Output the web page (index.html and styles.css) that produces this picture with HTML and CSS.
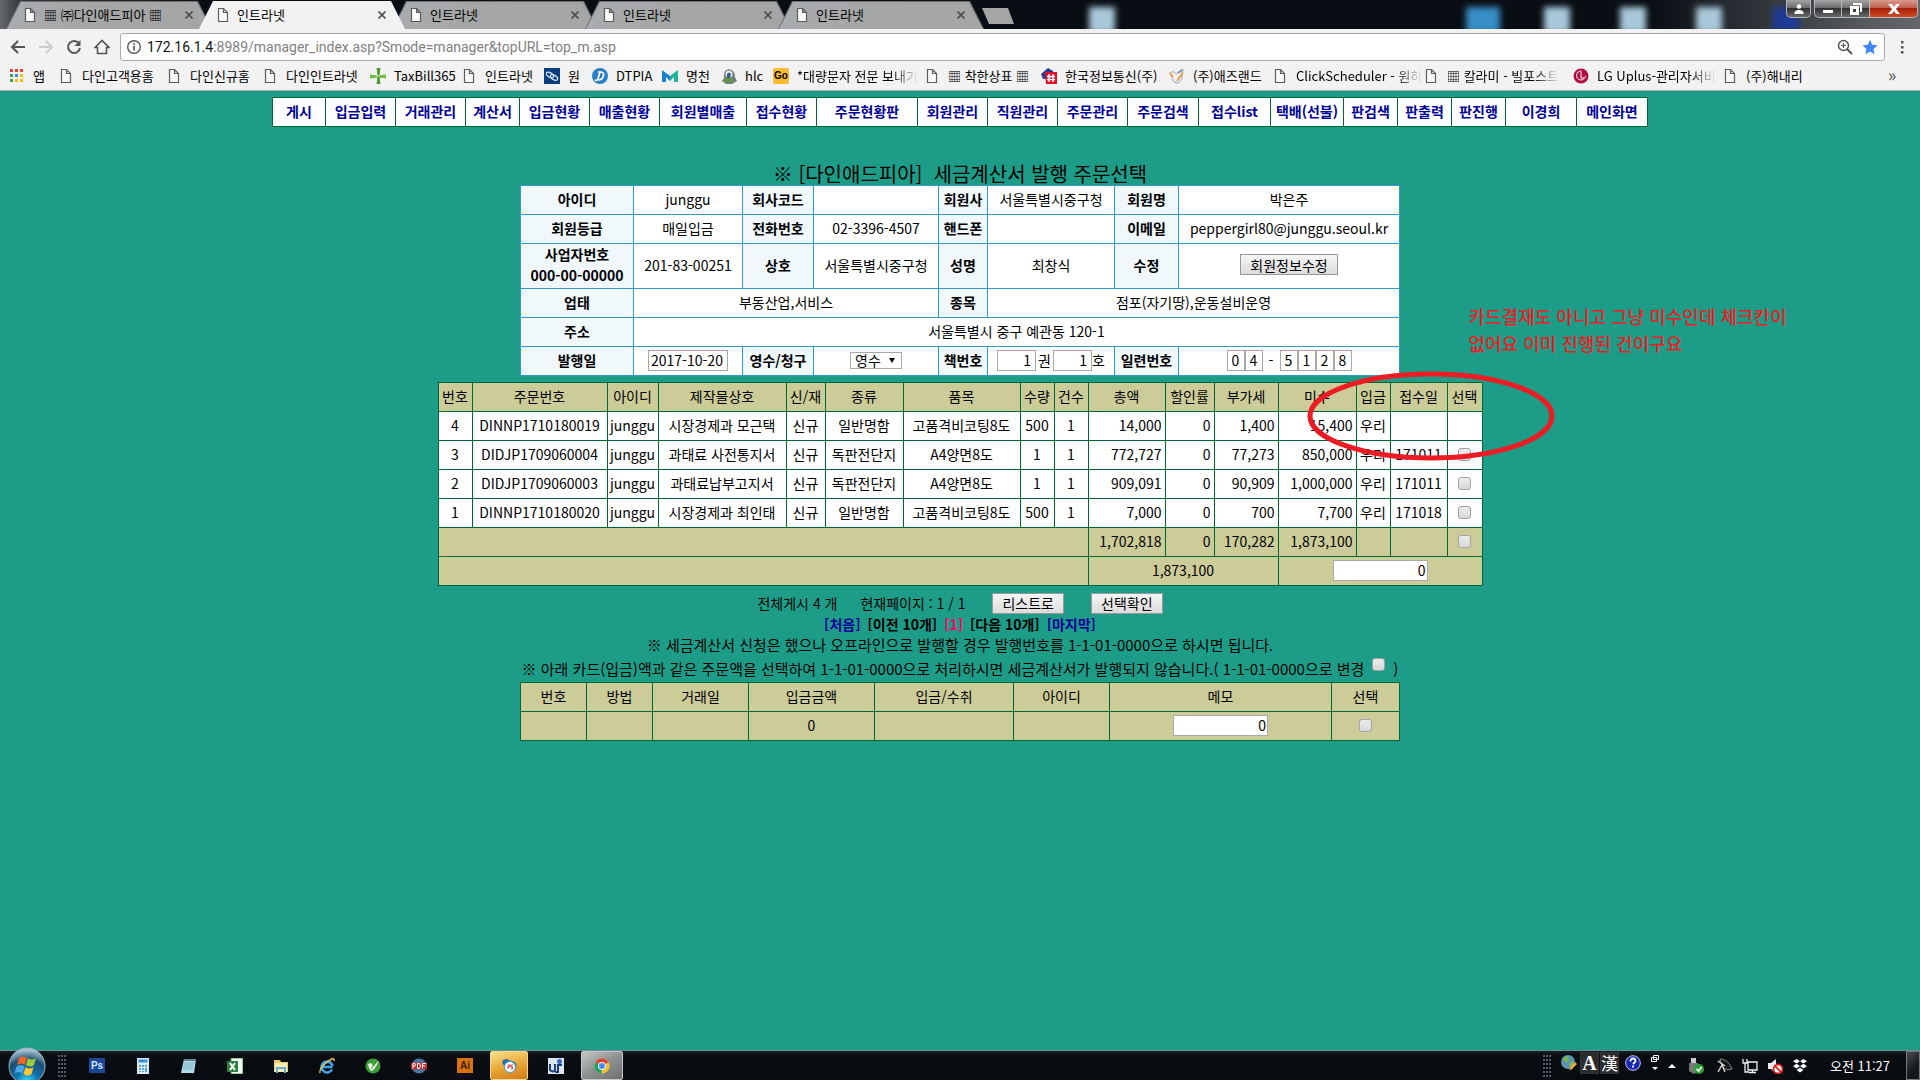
FILE: index.html
```html
<!DOCTYPE html>
<html lang="ko">
<head>
<meta charset="utf-8">
<title>인트라넷</title>
<link rel="stylesheet" href="styles.css">
</head>
<body>
<svg class="defs" aria-hidden="true">
  <symbol id="page" viewBox="0 0 16 16"><path d="M3.5 1.5h5l4 4v9h-9z M8.5 1.5v4h4" fill="#fafafa" stroke="#5c5c5c" stroke-width="1.2"/></symbol>
  <symbol id="close" viewBox="0 0 10 10"><path d="M1.5 1.5l7 7M8.500 1.500l-7 7" stroke="#4a4a4a" stroke-width="1.7" fill="none"/></symbol>
</svg>

<header class="browser">
  <div class="tabstrip">
    <div class="desk-blur b1"></div><div class="desk-blur b2"></div><div class="desk-blur b3"></div><div class="desk-blur b4"></div><div class="desk-blur b5"></div><div class="desk-blur b6"></div>
    <div class="tab"><svg class="ico"><use href="#page"/></svg><span class="tab-name">▦ ㈜다인애드피아 ▦</span><button class="tab-x" aria-label="닫기"><svg><use href="#close"/></svg></button></div>
    <div class="tab active"><svg class="ico"><use href="#page"/></svg><span class="tab-name">인트라넷</span><button class="tab-x" aria-label="닫기"><svg><use href="#close"/></svg></button></div>
    <div class="tab"><svg class="ico"><use href="#page"/></svg><span class="tab-name">인트라넷</span><button class="tab-x" aria-label="닫기"><svg><use href="#close"/></svg></button></div>
    <div class="tab"><svg class="ico"><use href="#page"/></svg><span class="tab-name">인트라넷</span><button class="tab-x" aria-label="닫기"><svg><use href="#close"/></svg></button></div>
    <div class="tab"><svg class="ico"><use href="#page"/></svg><span class="tab-name">인트라넷</span><button class="tab-x" aria-label="닫기"><svg><use href="#close"/></svg></button></div>
    <button class="newtab" aria-label="새 탭"></button>
    <div class="winbtns">
      <button class="wb user" aria-label="사용자"><svg viewBox="0 0 12 12"><circle cx="6" cy="3.500" r="2.300"/><path d="M1.500 11V9.500Q2 7 6 7t4.500 2.500V11z"/></svg></button>
      <button class="wb min" aria-label="최소화"><svg viewBox="0 0 12 12"><path d="M1 7h10v3H1z"/></svg></button>
      <button class="wb max" aria-label="복원"><svg viewBox="0 0 12 12"><path d="M3 0h9v9h-2V2H3z"/><path fill-rule="evenodd" d="M0 3h9v9H0zM3 6v3h3V6z"/></svg></button>
      <button class="wb quit" aria-label="닫기"><svg viewBox="0 0 12 12"><path d="M0 1h4l2 3 2-3h4L8 6l4 5H8L6 8l-2 3H0l4-5z"/></svg></button>
    </div>
  </div>

  <div class="toolbar">
    <button class="tool" aria-label="뒤로"><svg viewBox="0 0 16 16"><path d="M15 8H2M8 2L2 8l6 6" fill="none" stroke="#555" stroke-width="2"/></svg></button>
    <button class="tool" aria-label="앞으로"><svg viewBox="0 0 16 16"><path d="M1 8h13M8 2l6 6-6 6" fill="none" stroke="#ccc" stroke-width="2"/></svg></button>
    <button class="tool" aria-label="새로고침"><svg viewBox="0 0 16 16"><path d="M13 4.500A6 6 0 1 0 14 9" fill="none" stroke="#555" stroke-width="2"/><path d="M14.500 1v6h-6z" fill="#555"/></svg></button>
    <button class="tool" aria-label="홈"><svg viewBox="0 0 16 16"><path d="M1 8.500L8 1.500l7 7h-2.500v6h-9v-6z" fill="none" stroke="#555" stroke-width="1.600"/></svg></button>
    <div class="omnibox">
      <svg class="ico" viewBox="0 0 16 16"><circle cx="8" cy="8" r="6.300" fill="none" stroke="#555" stroke-width="1.400"/><path d="M7.200 7h1.700v4.500H7.200zM7.200 4.200h1.700v1.700H7.200z" fill="#555"/></svg>
      <span class="url"><b>172.16.1.4</b>:8989/manager_index.asp?Smode=manager&amp;topURL=top_m.asp</span>
      <svg class="ico" viewBox="0 0 16 16"><circle cx="6.500" cy="6.500" r="5" fill="none" stroke="#555" stroke-width="1.500"/><path d="M10 10l5 5" stroke="#555" stroke-width="2"/><path d="M4 6.500h5M6.500 4v5" stroke="#555" stroke-width="1.200"/></svg>
      <svg class="ico" viewBox="0 0 16 16"><path d="M8 .8l2.200 4.900 5.300.6-3.900 3.600 1 5.300L8 12.600l-4.600 2.600 1-5.300L.5 6.300l5.300-.6z" fill="#4285f4"/></svg>
    </div>
    <button class="tool menu" aria-label="메뉴"><svg viewBox="0 0 16 16"><path d="M7 2h2.500v2.500H7zM7 7h2.500v2.500H7zM7 12h2.500v2.500H7z" fill="#555"/></svg></button>
  </div>

  <nav class="bookmarks">
    <a href="#"><svg class="ico" viewBox="0 0 16 16"><path d="M1 1h3v3H1zM6 1h3v3H6zM11 1h3v3h-3z" fill="#ea4335"/><path d="M1 6h3v3H1z" fill="#34a853"/><path d="M6 6h3v3H6z" fill="#4285f4"/><path d="M11 6h3v3h-3zM6 11h3v3H6zM11 11h3v3h-3z" fill="#fbbc05"/><path d="M1 11h3v3H1z" fill="#34a853"/></svg><span>앱</span></a>
    <a href="#"><svg class="ico"><use href="#page"/></svg><span>다인고객용홈</span></a>
    <a href="#"><svg class="ico"><use href="#page"/></svg><span>다인신규홈</span></a>
    <a href="#"><svg class="ico"><use href="#page"/></svg><span>다인인트라넷</span></a>
    <a href="#"><svg class="ico" viewBox="0 0 16 16"><path d="M7 0h3l-1 7H8zM7 16h3L9 9H8z" fill="#4a9b2f" stroke="#4a9b2f"/><path d="M0 7l7 1v1l-7 1zM16 7L9 8v1l7 1z" fill="#6cba3f" stroke="#6cba3f"/></svg><span>TaxBill365</span></a>
    <a href="#"><svg class="ico"><use href="#page"/></svg><span>인트라넷</span></a>
    <a href="#"><svg class="ico" viewBox="0 0 16 16"><path d="M0 0h16v16H0z" fill="#0b3f80"/><ellipse cx="6" cy="7" rx="4" ry="2.200" transform="rotate(30 6 7)" fill="none" stroke="#cfe4f8" stroke-width="1.300"/><ellipse cx="10" cy="9.500" rx="4" ry="2.200" transform="rotate(30 10 9.500)" fill="none" stroke="#cfe4f8" stroke-width="1.300"/></svg><span>원</span></a>
    <a href="#"><svg class="ico" viewBox="0 0 16 16"><circle cx="8" cy="8" r="8" fill="#2b7fc4"/><path d="M6 4h3q4 1 2 5-1 3-5 3M8 4L6 11q-1 2-3 1" fill="none" stroke="#fff" stroke-width="1.700"/></svg><span>DTPIA</span></a>
    <a href="#"><svg class="ico" viewBox="0 0 16 16"><path d="M0 14V2l8 6v5L4 9v5z" fill="#1583cf"/><path d="M16 14V2L8 8v5l4-4v5z" fill="#24b39b"/></svg><span>명천</span></a>
    <a href="#"><svg class="ico" viewBox="0 0 16 16"><path d="M3 10Q2 2 8 1q6 1 6 8l2 4-5 3H5l-4-3z" fill="#6c8578"/><circle cx="8" cy="6" r="3.500" fill="#e9eef0"/><path d="M6 6q2-3 4 0l-1 4H6z" fill="#395a9b"/><path d="M3 13l5-2 4 3" stroke="#5d9e2c" stroke-width="2" fill="none"/></svg><span>hlc</span></a>
    <a href="#"><i class="go">Go</i><span>*대량문자 전문 보내기</span></a>
    <a href="#"><svg class="ico"><use href="#page"/></svg><span>▦ 착한상표 ▦</span></a>
    <a href="#"><svg class="ico" viewBox="0 0 16 16"><path d="M0 6l7-6 5 3v8H2z" fill="#2a3b90"/><path d="M4 4h12v12H5z" fill="#e3122b"/><path d="M8 6v8M12 6v8M6 8.500h8M6 11.500h8" stroke="#fff" stroke-width="1.400"/></svg><span>한국정보통신(주)</span></a>
    <a href="#"><svg class="ico" viewBox="0 0 16 16"><path d="M1 5q4-3 6 1l7-5-1 7q0 6-5 7-5-1-5-6z" fill="#f4efe8" stroke="#9aa6b4"/><path d="M1 5l3 4M8 13l6-9" stroke="#e89a3c" stroke-width="1.600"/><path d="M9 5l4-3" stroke="#4f8dc8" stroke-width="1.500"/></svg><span>(주)애즈랜드</span></a>
    <a href="#"><svg class="ico"><use href="#page"/></svg><span>ClickScheduler - 원하</span></a>
    <a href="#"><svg class="ico"><use href="#page"/></svg><span>▦ 칼라미 - 빌포스트</span></a>
    <a href="#"><svg class="ico" viewBox="0 0 16 16"><circle cx="8" cy="8" r="7.500" fill="#b00b45"/><path d="M8 4v6h3M12.500 8a4.500 4.500 0 1 1-4-5" fill="none" stroke="#fff" stroke-width="1"/></svg><span>LG Uplus-관리자서비</span></a>
    <a href="#"><svg class="ico"><use href="#page"/></svg><span>(주)해내리</span></a>
    <button class="more" aria-label="더보기">»</button>
  </nav>
</header>

<main>
  <nav class="menu-bar">
    <a class="w52" href="#">게시</a><a class="w70" href="#">입금입력</a><a class="w70" href="#">거래관리</a><a class="w54" href="#">계산서</a><a class="w70" href="#">입금현황</a><a class="w70" href="#">매출현황</a><a class="w87" href="#">회원별매출</a><a class="w70" href="#">접수현황</a><a class="w101" href="#">주문현황판</a><a class="w70" href="#">회원관리</a><a class="w70" href="#">직원관리</a><a class="w70" href="#">주문관리</a><a class="w71" href="#">주문검색</a><a class="w72" href="#">접수list</a><a class="w73" href="#">택배(선불)</a><a class="w54" href="#">판검색</a><a class="w54" href="#">판출력</a><a class="w54" href="#">판진행</a><a class="w71" href="#">이경희</a><a class="w71" href="#">메인화면</a>
  </nav>

  <h1>※ [다인애드피아]&nbsp; 세금계산서 발행 주문선택</h1>

  <table class="info">
    <colgroup><col class="w113"><col class="w109"><col class="w71"><col class="w125"><col class="w49"><col class="w127"><col class="w64"><col></colgroup>
    <tr><th>아이디</th><td>junggu</td><th>회사코드</th><td></td><th>회원사</th><td>서울특별시중구청</td><th>회원명</th><td>박은주</td></tr>
    <tr><th>회원등급</th><td>매일입금</td><th>전화번호</th><td>02-3396-4507</td><th>핸드폰</th><td></td><th>이메일</th><td>peppergirl80@junggu.seoul.kr</td></tr>
    <tr class="tall"><th>사업자번호<br>000-00-00000</th><td>201-83-00251</td><th>상호</th><td>서울특별시중구청</td><th>성명</th><td>최창식</td><th>수정</th><td><button class="btn">회원정보수정</button></td></tr>
    <tr><th>업태</th><td colspan="3">부동산업,서비스</td><th>종목</th><td colspan="3">점포(자기땅),운동설비운영</td></tr>
    <tr><th>주소</th><td colspan="7">서울특별시 중구 예관동 120-1</td></tr>
    <tr>
      <th><label for="date">발행일</label></th><td><input id="date" class="field date" value="2017-10-20"></td>
      <th><label for="kind">영수/청구</label></th><td><div class="pick"><select id="kind"><option>영수</option><option>청구</option></select></div></td>
      <th><label for="book">책번호</label></th><td><div class="inline books"><input id="book" class="field num" value="1"><span>권</span><input class="field num" value="1" aria-label="호"><span>호</span></div></td>
      <th><label for="serial">일련번호</label></th><td><div class="inline"><input id="serial" class="field digit" value="0"><input class="field digit" value="4" aria-label="일련번호 2"><span class="dash">-</span><input class="field digit" value="5" aria-label="일련번호 3"><input class="field digit" value="1" aria-label="일련번호 4"><input class="field digit" value="2" aria-label="일련번호 5"><input class="field digit" value="8" aria-label="일련번호 6"></div></td>
    </tr>
  </table>

  <section class="orders-wrap">
    <table class="list orders">
      <colgroup><col class="w34"><col class="w135"><col class="w51"><col class="w128"><col class="w39"><col class="w78"><col class="w117"><col class="w34"><col class="w34"><col class="w77"><col class="w49"><col class="w64"><col class="w78"><col class="w34"><col class="w57"><col></colgroup>
      <thead><tr><th>번호</th><th>주문번호</th><th>아이디</th><th>제작물상호</th><th>신/재</th><th>종류</th><th>품목</th><th>수량</th><th>건수</th><th>총액</th><th>할인률</th><th>부가세</th><th>미수</th><th>입금</th><th>접수일</th><th>선택</th></tr></thead>
      <tbody>
      <tr><td>4</td><td>DINNP1710180019</td><td>junggu</td><td>시장경제과 모근택</td><td>신규</td><td>일반명함</td><td>고품격비코팅8도</td><td>500</td><td>1</td><td class="r">14,000</td><td class="r">0</td><td class="r">1,400</td><td class="r">15,400</td><td>우리</td><td></td><td></td></tr>
      <tr><td>3</td><td>DIDJP1709060004</td><td>junggu</td><td>과태료 사전통지서</td><td>신규</td><td>독판전단지</td><td>A4양면8도</td><td>1</td><td>1</td><td class="r">772,727</td><td class="r">0</td><td class="r">77,273</td><td class="r">850,000</td><td>우리</td><td>171011</td><td><input type="checkbox" aria-label="3번 선택"></td></tr>
      <tr><td>2</td><td>DIDJP1709060003</td><td>junggu</td><td>과태료납부고지서</td><td>신규</td><td>독판전단지</td><td>A4양면8도</td><td>1</td><td>1</td><td class="r">909,091</td><td class="r">0</td><td class="r">90,909</td><td class="r">1,000,000</td><td>우리</td><td>171011</td><td><input type="checkbox" aria-label="2번 선택"></td></tr>
      <tr><td>1</td><td>DINNP1710180020</td><td>junggu</td><td>시장경제과 최인태</td><td>신규</td><td>일반명함</td><td>고품격비코팅8도</td><td>500</td><td>1</td><td class="r">7,000</td><td class="r">0</td><td class="r">700</td><td class="r">7,700</td><td>우리</td><td>171018</td><td><input type="checkbox" aria-label="1번 선택"></td></tr>
      </tbody>
      <tfoot>
      <tr><td colspan="9"></td><td class="r">1,702,818</td><td class="r">0</td><td class="r">170,282</td><td class="r">1,873,100</td><td></td><td></td><td><input type="checkbox" aria-label="전체 선택"></td></tr>
      <tr><td colspan="9"></td><td colspan="3">1,873,100</td><td colspan="4"><input class="field sum" value="0" aria-label="선택 합계"></td></tr>
      </tfoot>
    </table>
    <svg class="mark" viewBox="0 0 248 90" aria-hidden="true"><ellipse cx="124" cy="45" rx="121" ry="42" fill="none" stroke="#ed1c24" stroke-width="5"/></svg>
    <p class="memo">카드결재도 아니고 그냥 미수인데 체크칸이<br>없어요 이미 진행된 건이구요</p>
  </section>

  <div class="status"><span>전체게시 4 개</span><span>현재페이지 : 1 / 1</span><button class="btn">리스트로</button><button class="btn">선택확인</button></div>
  <div class="pager"><a href="#">[처음]</a><span>[이전 10개]</span><span class="now">[1]</span><span>[다음 10개]</span><a href="#">[마지막]</a></div>
  <p class="note">※ 세금계산서 신청은 했으나 오프라인으로 발행할 경우 발행번호를 1-1-01-0000으로 하시면 됩니다.</p>
  <p class="note last"><label for="chg">※ 아래 카드(입금)액과 같은 주문액을 선택하여 1-1-01-0000으로 처리하시면 세금계산서가 발행되지 않습니다.( 1-1-01-0000으로 변경</label><input id="chg" type="checkbox"><span>)</span></p>

  <table class="list pays">
    <colgroup><col class="w66"><col class="w66"><col class="w96"><col class="w126"><col class="w139"><col class="w96"><col class="w222"><col></colgroup>
    <thead><tr><th>번호</th><th>방법</th><th>거래일</th><th>입금금액</th><th>입금/수취</th><th>아이디</th><th>메모</th><th>선택</th></tr></thead>
    <tfoot><tr><td></td><td></td><td></td><td>0</td><td></td><td></td><td><input class="field sum" value="0" aria-label="메모"></td><td><input type="checkbox" aria-label="선택"></td></tr></tfoot>
  </table>
</main>

<footer class="taskbar">
  <button class="orb" aria-label="시작"><svg viewBox="0 0 38 38"><defs><radialGradient id="og" cx=".5" cy=".95" r=".9"><stop offset="0" stop-color="#35e0ff"/><stop offset=".35" stop-color="#1173ae"/><stop offset=".7" stop-color="#1b4d72"/><stop offset="1" stop-color="#a9c3d2"/></radialGradient></defs><circle cx="19" cy="19" r="18" fill="url(#og)" stroke="#9ab3c0"/><path d="M11 11q4-3 8 0l-2 7q-4-3-8 0z" fill="#f0652a"/><path d="M20 11q4 3 8 0l-2 7q-4 3-8 0z" fill="#9ccc3c"/><path d="M8.500 19.500q4-3 8 0l-2 7q-4-3-8 0z" fill="#4aa9e8"/><path d="M17.500 20q4 3 8 0l-2 7q-4 3-8 0z" fill="#fdc52f"/></svg></button>
  <i class="grip"></i>
  <div class="apps">
    <button aria-label="Photoshop"><i class="sq ps">Ps</i></button>
    <button aria-label="계산기"><svg viewBox="0 0 16 16"><path d="M2 0h12v16H2z" fill="#d9ecfa"/><path d="M3.500 1.500h9v3h-9z" fill="#3c8fd0"/><path d="M4 7h2v2H4zM7 7h2v2H7zM10 7h2v2h-2zM4 10h2v2H4zM7 10h2v2H7zM10 10h2v4h-2zM4 13h2v1H4zM7 13h2v1H7z" fill="#5a9dd0"/></svg></button>
    <button aria-label="메모장"><svg viewBox="0 0 16 16"><path d="M3 1h12l-2 14H0z" fill="#b4dce9"/><path d="M3 1h12v2H3z" fill="#6c7f88"/><path d="M3 5h10M3 7h10M2 9h10M2 11h10" stroke="#6fa9bf" stroke-width=".8"/></svg></button>
    <button aria-label="Excel"><svg viewBox="0 0 16 16"><path d="M4 0h12v16H4z" fill="#f1f8ef" stroke="#4d9b4d"/><path d="M0 3h11v11H0z" fill="#2d8040"/><path d="M3 5l5 7M8 5l-5 7" stroke="#fff" stroke-width="2"/></svg></button>
    <button aria-label="탐색기"><svg viewBox="0 0 16 16"><path d="M1 2h6l1 2h7v10H1z" fill="#e9c96a"/><path d="M2 5h12v9H2z" fill="#fbeeb2"/><path d="M4 15v-5h8v5" fill="none" stroke="#66aee0" stroke-width="2"/></svg></button>
    <button aria-label="Internet Explorer"><svg viewBox="0 0 16 16"><path d="M13.500 9H4.500a4.500 4.500 0 0 1 9-1M13 11.500a5.500 5.500 0 1 1 .5-3.500" fill="none" stroke="#3ea4ec" stroke-width="2.600"/><path d="M1 15Q0 10 8 4t7-1" fill="none" stroke="#f4c542" stroke-width="1.400"/></svg></button>
    <button aria-label="CorelDRAW"><svg viewBox="0 0 16 16"><circle cx="8" cy="8" r="7.500" fill="#3aa03c"/><path d="M3 6q1 6 4 7l3-3 4-7-6 5-2-3z" fill="#f5f8e7"/><path d="M6 11l5-6" stroke="#3aa03c"/></svg></button>
    <button aria-label="PDF"><svg viewBox="0 0 16 16"><circle cx="8" cy="8" r="7.500" fill="#4675a6"/><path d="M0 4.500h16v7H0z" fill="#c42d2d"/><path d="M2 10.500v-5h2q1 1.300 0 2.500H2M6.500 5.500h2q2 2.500 0 5h-2zM11.500 10.500v-5H15M12 8h2" fill="none" stroke="#fff" stroke-width="1"/></svg></button>
    <button aria-label="Illustrator"><i class="sq ai">Ai</i></button>
    <button class="hot" aria-label="메신저"><svg viewBox="0 0 16 16"><path d="M1 4q2-5 7-2l6 2q3 4 0 8-5 5-9 0z" fill="#286fa5"/><circle cx="9" cy="9" r="5.500" fill="#fff" stroke="#3ba5d4"/><path d="M7 11V7h2v2H7M12 7h-2v2h1.500v2H10" fill="none" stroke="#d43b3b"/></svg></button>
    <button aria-label="UI"><svg viewBox="0 0 16 16"><path d="M0 0h16v16H0z" fill="#dbe6f4"/><path d="M2 6v6q3 3 5 0V6M7 14h3V7h4" fill="none" stroke="#1e3c78" stroke-width="2"/><circle cx="11.500" cy="3.500" r="2.500" fill="#3a67c0"/></svg></button>
    <button class="on" aria-label="Chrome"><svg viewBox="0 0 16 16"><circle cx="8" cy="8" r="7.500" fill="#f3c62c"/><path d="M8 8L1.500 4.200A7.500 7.500 0 0 1 14.500 4.300z" fill="#dc4437"/><path d="M8 8L1.500 4.200A7.500 7.500 0 0 0 7.500 15.500z" fill="#1ea362"/><circle cx="8" cy="8" r="3.600" fill="#4a8af4" stroke="#fff"/></svg></button>
  </div>
  <div class="tray">
    <i class="grip"></i>
    <svg class="ico up" viewBox="0 0 16 16"><circle cx="7" cy="7" r="7" fill="#5d93b5"/><path d="M2 3q3-3 5-1l1 4-4 1zM8 9l4-3 1 4-4 3z" fill="#7fb84a"/><path d="M8 14l6-7 2 2-6 6z" fill="#f0a94c"/></svg>
    <button class="ime">A</button><button class="ime han">漢</button>
    <svg class="ico up help" viewBox="0 0 16 16"><circle cx="8" cy="8" r="7.300" fill="#1726b3" stroke="#c8ccec"/><path d="M5.500 6.500q0-3 2.500-3t2.500 2.500Q10.500 7 8 9M8 10.500v2" fill="none" stroke="#fff" stroke-width="1.800"/></svg>
    <svg class="ico mini" viewBox="0 0 10 20"><path d="M3.500 2.500h5v4h-5zM1.500 4.500h5v4h-5z" fill="#101418" stroke="#fff"/><path d="M2 14h6l-3 3z" fill="#fff"/></svg>
    <svg class="ico arrow" viewBox="0 0 10 10"><path d="M1 7h8L5 3z" fill="#fff"/></svg>
    <svg class="ico" viewBox="0 0 16 16"><path d="M3 0h5v5H3z" fill="#ccc"/><path d="M1 5h9v9l-4 2-5-3z" fill="#777"/><circle cx="11" cy="11" r="5" fill="#2fa236"/><path d="M8.500 11l2 2 3-4" stroke="#fff" stroke-width="1.500" fill="none"/></svg>
    <svg class="ico sat" viewBox="0 0 16 16"><path d="M3 1q8 0 12 10-6 2-9-2T3 1z" fill="#171717" stroke="#888"/><path d="M1 14l4-7 3 7M1 3l7 5" stroke="#ddd" stroke-width="1.300" fill="none"/></svg>
    <svg class="ico" viewBox="0 0 16 16"><path d="M6 4h9v8H6zM7 14.500h7M10.500 12v3M1 1v4h4V1M3 5v9h4" fill="none" stroke="#f2f2f2" stroke-width="1.300"/></svg>
    <svg class="ico" viewBox="0 0 16 16"><path d="M1 5h3l5-4v14l-5-4H1z" fill="#eee"/><circle cx="11" cy="11" r="4.500" fill="#fff" stroke="#dd2222" stroke-width="1.800"/><path d="M8 8l6 6" stroke="#dd2222" stroke-width="1.800"/></svg>
    <svg class="ico" viewBox="0 0 16 16"><path d="M4.500 1L8 3.300 4.500 5.600 1 3.300zM11.500 1L15 3.300l-3.500 2.300L8 3.300zM4.500 5.800L8 8.100l-3.500 2.300L1 8.100zM11.500 5.800L15 8.100l-3.500 2.300L8 8.100zM8 9.800l3.500 2.300L8 14.400l-3.500-2.300z" fill="#fff"/></svg>
    <time>오전 11:27</time>
    <button class="showdesk" aria-label="바탕 화면 보기"></button>
  </div>
</footer>
</body>
</html>
```
FILE: styles.css
```css
* { box-sizing: border-box; }

body {
  margin: 0;
  min-height: 100vh;
  display: flex;
  flex-direction: column;
  background: #1d9d88;
  color: #000;
  font: 14px/22px "Noto Sans CJK KR", sans-serif;
}

button, input, select { font: inherit; color: inherit; margin: 0; }
button { padding: 0; border: 0; background: none; }
a { color: inherit; text-decoration: none; }
.defs { position: absolute; width: 0; height: 0; }
.ico { width: 16px; height: 16px; flex: none; }

/* ---------- browser frame ---------- */
.browser { background: #f2f2f2; border-bottom: 1px solid #b0b0b0; font-size: 13px; }

.tabstrip {
  position: relative;
  display: flex;
  height: 29px;
  padding: 1px 0 0 6px;
  overflow: hidden;
  background: linear-gradient(90deg, #65686b 0, #34383c 20px, #090e15 210px, #090e15 86%, #55595c 97%, #63666a 100%);
}
.tab {
  position: relative;
  display: flex;
  align-items: center;
  width: 206px;
  flex: none;
  margin-right: -13px;
  padding: 0 18px 0 16px;
  isolation: isolate;
}
.tab::before, .tab::after {
  content: "";
  position: absolute;
  inset: 0;
  z-index: -1;
  background: #6d6f70;
  clip-path: polygon(0 100%, 14px 0, calc(100% - 14px) 0, 100% 100%);
}
.tab::after { inset: 1px 1px 0; background: linear-gradient(90deg, #a9acb0, #a5a6a6 40%, #a5a5a5); }
.tab:first-child::after { background: #adb0b5; }
.tab.active { z-index: 2; }
.tab.active::before, .tab.active::after { background: #f2f2f2; }
.tab-name { flex: 1; margin-left: 6px; white-space: nowrap; }
.tab-x, .tab-x svg { width: 10px; height: 10px; display: block; }
.newtab { width: 32px; height: 16px; margin: 7px 0 0 11px; background: #a5a5a5; clip-path: polygon(0 0, 26px 0, 100% 100%, 7px 100%); }

.desk-blur { position: absolute; top: 7px; width: 26px; height: 26px; filter: blur(3px); background: #a9c9da; }
.b1 { left: 1089px; }
.b2 { left: 1466px; width: 34px; background: #388fc8; }
.b3 { left: 1544px; }
.b4 { left: 1620px; }
.b5 { left: 1696px; }
.b6 { left: 1773px; background: #1d3a94; }

.winbtns { position: relative; display: flex; height: 18px; margin: -1px 2px 0 auto; }
.wb {
  width: 28px;
  border: 1px solid #b5b7b9;
  border-top: 0;
  background: linear-gradient(#a2a4a6, #6a6c6e 45%, #303234 50%, #66686a);
  display: grid;
  place-items: center;
}
.wb svg { width: 12px; height: 12px; fill: #fff; }
.user { width: 25px; margin-right: 3px; border-radius: 0 0 5px 5px; }
.min { border-radius: 0 0 0 5px; }
.max, .quit { border-left: 0; }
.quit { width: 48px; border-radius: 0 0 5px 0; background: linear-gradient(#d99a8d, #c0604e 45%, #a82008 50%, #cf4a25); }

.toolbar { display: flex; align-items: center; height: 33px; padding: 2px 4px 0 4px; }
.tool { width: 28px; height: 28px; display: grid; place-items: center; }
.tool svg { width: 16px; height: 16px; }
.menu { margin-left: 3px; }
.omnibox {
  flex: 1;
  display: flex;
  align-items: center;
  gap: 9px;
  height: 28px;
  margin-left: 4px;
  padding: 0 6px 0 5px;
  border: 1px solid #aaa;
  border-radius: 3px;
  background: #fff;
}
.url { flex: 1; margin-left: -4px; font-family: Roboto, sans-serif; font-size: 14px; color: #808080; }
.url b { color: #111; font-weight: 400; }

.bookmarks {
  display: grid;
  grid-template-columns: 49px 108px 96px 108px 91px 83px 48px 70px 59px 52px 151px 117px 128px 103px 151px 150px 149px 1fr 40px;
  align-items: center;
  height: 28px;
  padding: 0 8px 0 9px;
}
.bookmarks a { display: flex; align-items: center; gap: 8px; white-space: nowrap; }
.bookmarks a:nth-child(11) span, .bookmarks a:nth-child(15) span, .bookmarks a:nth-child(16) span, .bookmarks a:nth-child(17) span {
  -webkit-mask-image: linear-gradient(90deg, #000 calc(100% - 26px), transparent);
  mask-image: linear-gradient(90deg, #000 calc(100% - 26px), transparent);
}
.go { width: 16px; height: 16px; flex: none; border-radius: 2px; background: #fbb934; font: 900 10px/16px "Liberation Sans", sans-serif; text-align: center; }
.more { font-size: 18px; line-height: 18px; padding-bottom: 4px; color: #555; }

/* ---------- page ---------- */
main { flex: 1; display: flex; flex-direction: column; align-items: center; padding-top: 6px; }

.menu-bar { display: flex; border: 1px solid #006633; background: #fff; }
.menu-bar a { flex: none; height: 28px; line-height: 26px; text-align: center; color: #000099; font-weight: 700; white-space: nowrap; }
.menu-bar a + a { border-left: 1px solid #006633; }

.w34 { width: 34px; } .w39 { width: 39px; } .w49 { width: 49px; } .w51 { width: 51px; }
.w52 { width: 52px; } .w54 { width: 54px; } .w57 { width: 57px; } .w64 { width: 64px; }
.w66 { width: 66px; } .w70 { width: 70px; } .w71 { width: 71px; } .w72 { width: 72px; }
.w73 { width: 73px; } .w77 { width: 77px; } .w78 { width: 78px; } .w87 { width: 87px; }
.w96 { width: 96px; } .w101 { width: 101px; } .w109 { width: 109px; } .w113 { width: 113px; }
.w117 { width: 117px; } .w125 { width: 125px; } .w126 { width: 126px; } .w127 { width: 127px; }
.w128 { width: 128px; } .w135 { width: 135px; } .w139 { width: 139px; } .w222 { width: 222px; }

h1 { margin: 36px 0 0; font-size: 20px; line-height: 22px; font-weight: 400; }

table { border-collapse: collapse; table-layout: fixed; background: #fff; }
th, td { height: 29px; padding: 0 0 2px; border: 1px solid #006633; text-align: center; line-height: 22px; white-space: nowrap; }
.info, .pays { width: 880px; }
.info th, .info td { border-color: #3399cc; }
.info th { background: #f0f8fc; font-weight: 700; }
.info .tall th, .info .tall td { height: 45px; line-height: 21px; }
.orders { width: 1045px; }
.list th { font-weight: 400; }
.list thead, .list tfoot { background: #cccc99; }
.list .r { text-align: right; padding-right: 3px; }

.btn { height: 21px; padding: 0 9px; border: 1px solid #999; background: linear-gradient(#f6f6f6, #dcdcdc); line-height: 18px; }
.field { height: 21px; padding: 0 2px; border: 1px solid #a9a9a9; border-radius: 0; background: #fff; line-height: 18px; display: block; margin: 0 auto; }
.date { width: 80px; }
.num { width: 39px; text-align: right; padding-right: 4px; }
.digit { width: 18px; padding: 0 4px; }
.sum { width: 95px; text-align: right; padding-right: 1px; }
.inline { display: flex; align-items: center; justify-content: center; }
.inline .field { margin: 0; }
.books span { width: 17px; }
.books span:last-child { width: 13px; }
.dash { width: 17px; }
.pick { position: relative; width: 52px; margin: 0 auto; }
.pick select { display: block; width: 52px; height: 17px; padding: 0 4px; border: 1px solid #a9a9a9; border-radius: 0; background: #fff; line-height: 15px; appearance: none; }
.pick::after { content: ""; position: absolute; right: 7px; top: 6px; border: 3px solid transparent; border-top: 5px solid #000; border-bottom: 0; }

input[type="checkbox"] { appearance: none; display: block; width: 13px; height: 13px; margin: 0 auto; border: 1px solid #a3a3a3; border-radius: 3px; background: linear-gradient(#ececec, #d8d8d8); }

.orders-wrap { position: relative; margin-top: 6px; }
.mark { position: absolute; left: 869px; top: -11px; width: 248px; height: 90px; pointer-events: none; }
.memo { position: absolute; left: 1031px; top: -79px; margin: 0; font-size: 18px; line-height: 27px; font-weight: 500; color: #ed1c24; white-space: nowrap; }

.status { display: flex; align-items: center; margin-top: 6px; }
.status span { margin-right: 23px; }
.status .btn { margin-left: 4px; }
.status .btn + .btn { margin-left: 27px; }
.pager { display: flex; gap: 7px; line-height: 20px; font-weight: 700; }
.pager a { color: #000099; }
.pager .now { color: #ff0066; }
.note { margin: 0; font-size: 15px; }
.last { display: flex; align-items: center; gap: 8px; padding: 2px 0; }
.last input { align-self: flex-start; }
.pays { background: #cccc99; }

/* ---------- taskbar ---------- */
.taskbar { position: relative; display: flex; align-items: center; height: 30px; border-top: 1px solid #6f8c90; background: linear-gradient(#1b2126, #0a0e13 4px, #070b10); color: #fff; }
.orb { position: relative; width: 38px; height: 38px; margin: -4px 12px 0 8px; align-self: flex-start; }
.orb svg { display: block; width: 38px; height: 38px; }
.grip { width: 8px; height: 22px; background: radial-gradient(circle at 1px 1px, #555b61 1px, transparent 1px) 0 0 / 3px 4px; }
.apps { display: flex; align-self: stretch; margin-left: 8px; }
.apps button { width: 46px; display: grid; place-items: center; }
.apps svg { width: 16px; height: 16px; }
.apps .hot { width: 38px; margin: 0 5px 0 2px; border: 1px solid #f2d690; border-radius: 2px; background: linear-gradient(165deg, #f9e28a, #e9a83a 50%, #d07a14); }
.apps .on { width: 42px; margin-left: 2px; border: 1px solid #c6c8ca; border-radius: 2px; background: linear-gradient(150deg, #c2c4c6, #8e9092 50%, #6d6f71); }
.sq { width: 16px; height: 15px; font: 700 10px/15px "Liberation Sans", sans-serif; text-align: center; }
.ps { background: #1b4796; color: #cfe6ff; }
.ai { background: #d9730d; color: #3c1b00; }

.tray { display: flex; align-items: center; align-self: stretch; margin-left: auto; gap: 9px; }
.up, .ime { margin-top: -5px; }
.tray .up { margin-left: 1px; }
.ime { width: 19px; height: 22px; border: 1px solid #333; background: #292c2f; font: 700 20px/18px "Liberation Serif", serif; color: #fff; margin-left: -6px; }
.han { margin-left: -8px; font: 400 17px/18px "Noto Sans CJK KR", sans-serif; }
.tray .help { margin-left: -3px; }
.tray .mini { width: 10px; height: 20px; margin: -6px -2px 0 0; }
.tray .arrow { width: 10px; height: 10px; margin: 0 2px 0 0; }
.tray .sat { margin-left: 4px; }
.tray time { margin-left: 13px; font-size: 13px; }
.showdesk { align-self: stretch; width: 14px; margin-left: 7px; border: 1px solid #73787c; background: linear-gradient(135deg, #4a4e52, #14181c 60%); }
```
